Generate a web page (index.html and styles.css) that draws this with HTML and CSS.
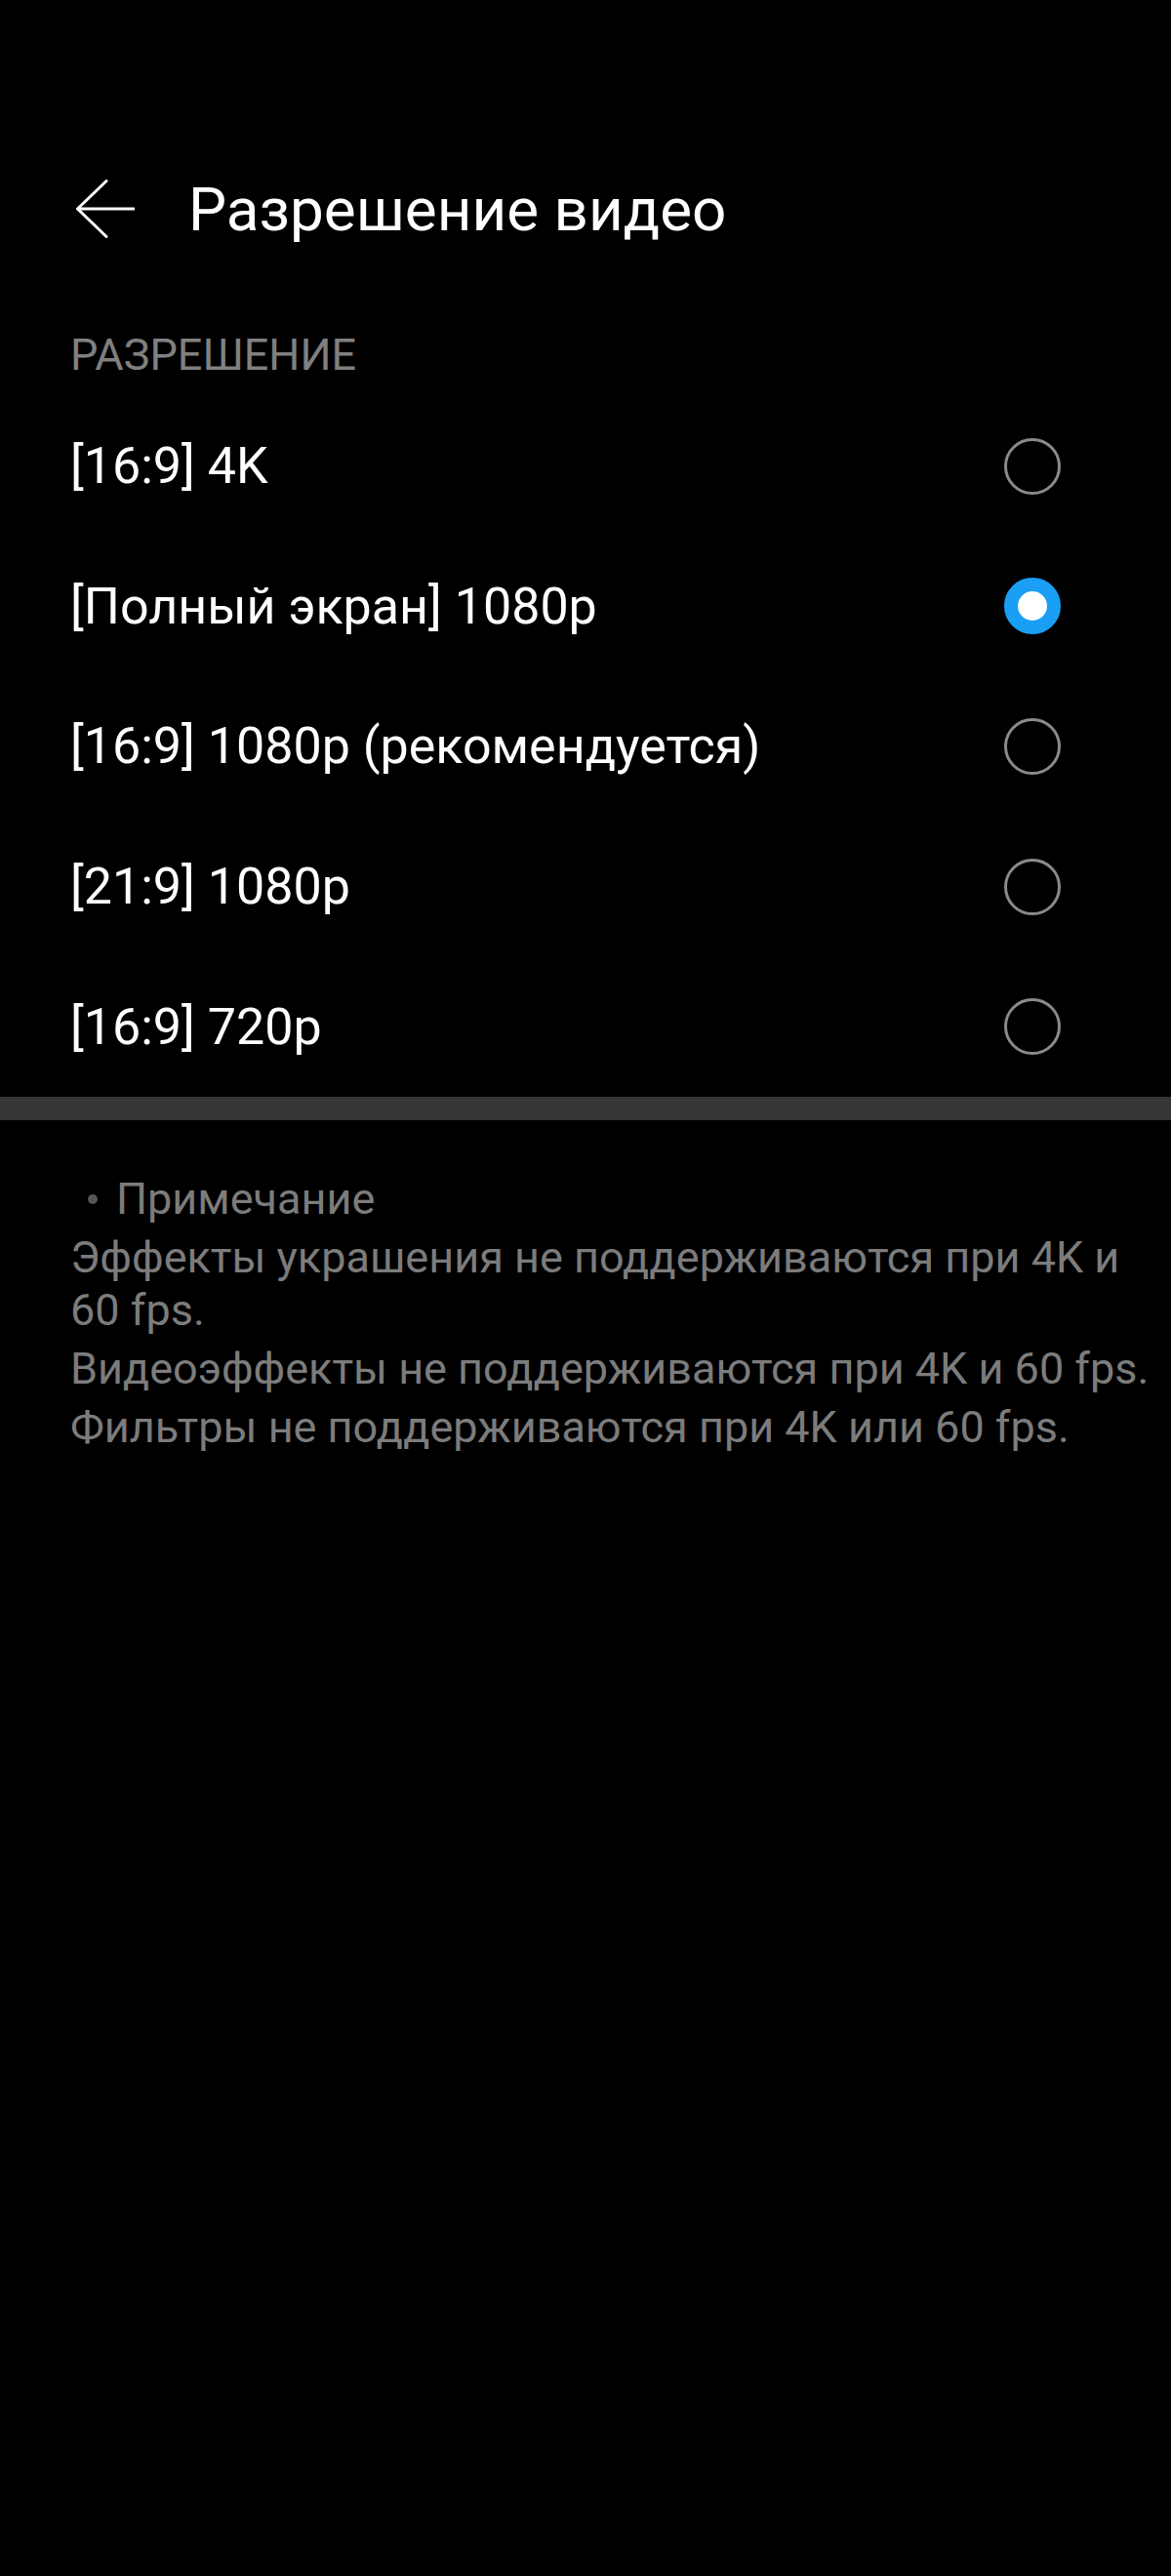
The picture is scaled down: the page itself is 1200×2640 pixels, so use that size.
FILE: index.html
```html
<!DOCTYPE html>
<html lang="ru">
  <head>
    <meta charset="UTF-8" />
    <meta name="viewport" content="width=device-width, initial-scale=1.0" />
    <title>Разрешение видео</title>
    <link rel="stylesheet" href="styles.css">
  </head>
  <body>
    <div id="appBar">
      <svg class="backIcon" width="60" height="60" viewBox="0 0 60 60">
        <path d="M31 1.5 L1.5 30 L31 58.5 M1.5 30 H59" fill="none" stroke="#fff" stroke-width="3" stroke-linecap="round" stroke-linejoin="round" />
      </svg>
      <h1 id="title">Разрешение видео</h1>
    </div>

    <div class="sectionLabel">РАЗРЕШЕНИЕ</div>

    <div id="optionList">
      <div class="option">
        <span class="optionText">[16:9] 4K</span>
        <span class="radio"></span>
      </div>
      <div class="option">
        <span class="optionText">[Полный экран] 1080p</span>
        <span class="radio checked"></span>
      </div>
      <div class="option">
        <span class="optionText">[16:9] 1080p (рекомендуется)</span>
        <span class="radio"></span>
      </div>
      <div class="option">
        <span class="optionText">[21:9] 1080p</span>
        <span class="radio"></span>
      </div>
      <div class="option">
        <span class="optionText">[16:9] 720p</span>
        <span class="radio"></span>
      </div>
    </div>

    <div class="divider"></div>

    <div id="notes">
      <div class="noteTitle"><span class="dot"></span>Примечание</div>
      <p>Эффекты украшения не поддерживаются при 4K и 60 fps.</p>
      <p>Видеоэффекты не поддерживаются при 4K и 60 fps.</p>
      <p>Фильтры не поддерживаются при 4K или 60 fps.</p>
    </div>
  </body>
</html>
```

FILE: styles.css
```css
body {
  margin: 0;
  background-color: #000;
  color: #fff;
  font-family: Roboto, "Noto Sans", sans-serif;
  height: 2640px;
}
#appBar {
  display: flex;
  flex-direction: row;
  align-items: center;
  height: 128px;
  margin-top: 150px;
  padding-left: 78px;
  gap: 55px;
}
.backIcon {
  flex-shrink: 0;
}
#title {
  margin: 0;
  font-size: 62px;
  font-weight: 400;
  color: #fff;
}
.sectionLabel {
  margin-top: 56px;
  margin-bottom: 12px;
  padding-left: 72px;
  height: 60px;
  line-height: 60px;
  font-size: 45px;
  color: #808080;
}
.option {
  display: flex;
  flex-direction: row;
  align-items: center;
  justify-content: space-between;
  height: 143.6px;
  padding: 0 113px 0 72px;
}
.optionText {
  font-size: 52px;
  color: #fff;
}
.radio {
  width: 58px;
  height: 58px;
  box-sizing: border-box;
  border: 3px solid #8a8a8a;
  border-radius: 50%;
}
.radio.checked {
  border: 14px solid #1a9ff5;
  background-color: #fff;
}
.divider {
  height: 24px;
  background-color: #363636;
}
#notes {
  padding: 0 12px 0 72px;
  margin-top: 54px;
  font-size: 45px;
  line-height: 54px;
  color: #7c7c7c;
}
.noteTitle {
  display: flex;
  align-items: center;
  gap: 19px;
  padding-left: 18px;
}
.dot {
  width: 10px;
  height: 10px;
  border-radius: 50%;
  background-color: #555;
}
#notes p {
  margin: 6px 0 0 0;
}
```
